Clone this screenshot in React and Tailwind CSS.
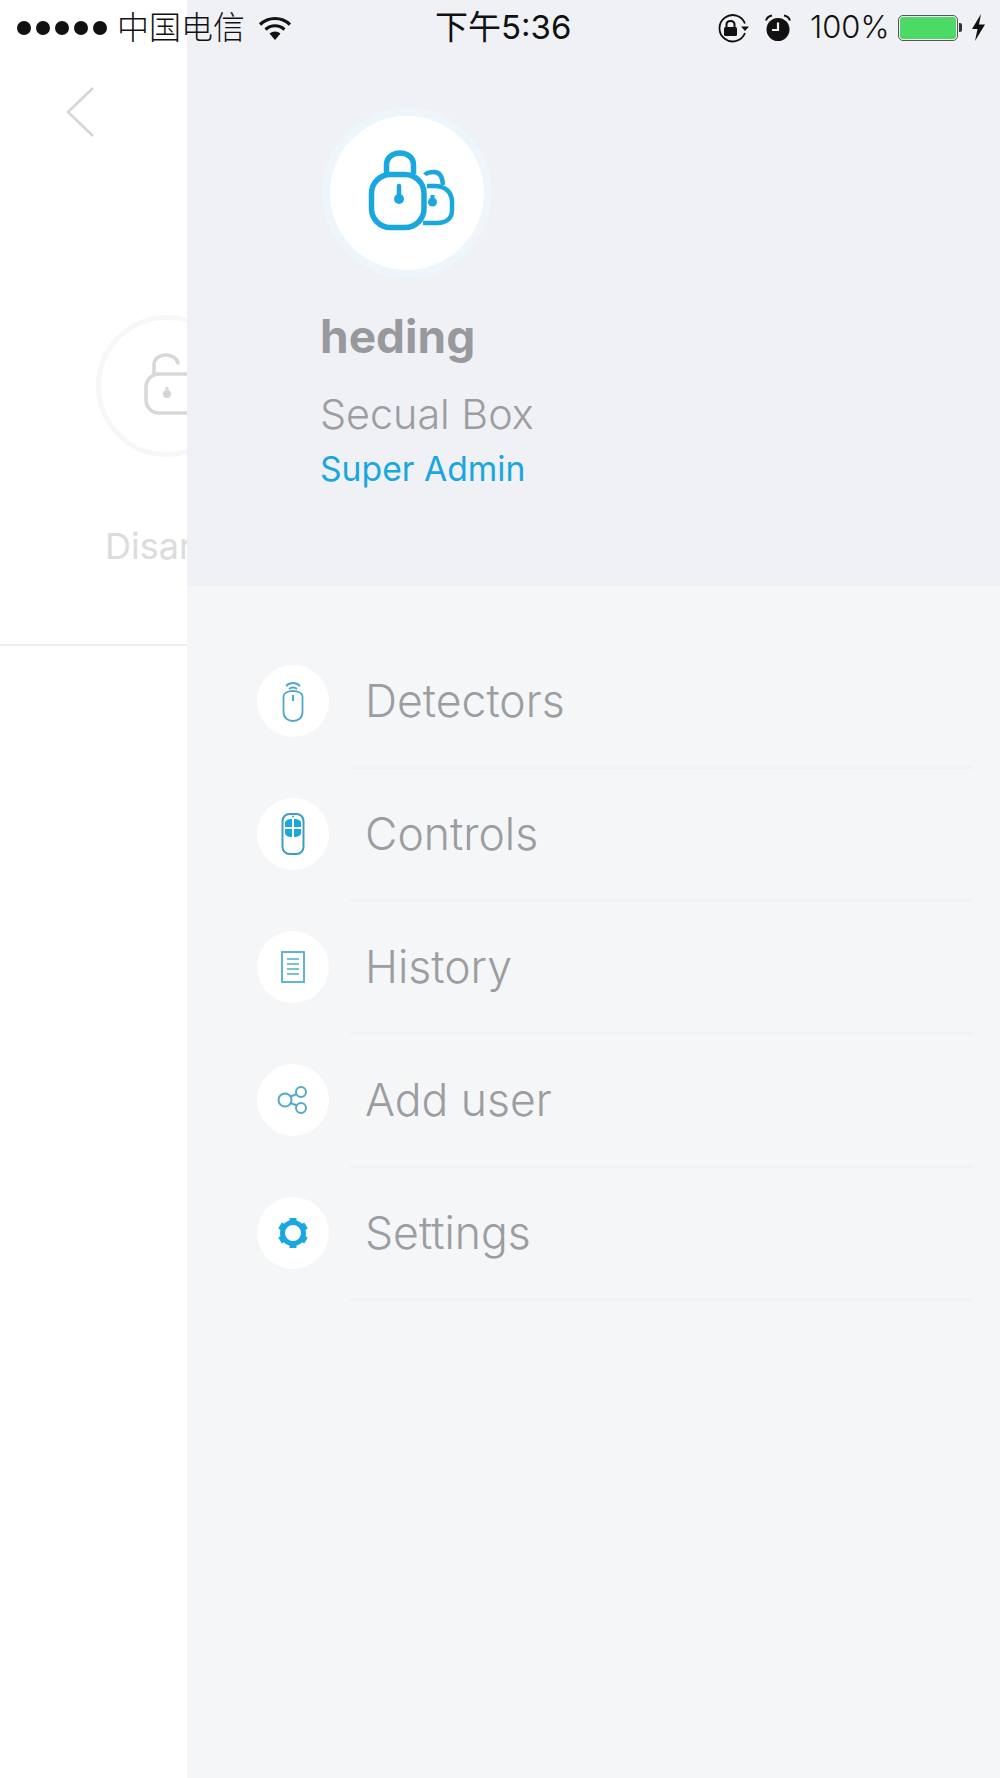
const blue = "#1aa7e0";

function Wifi() {
  return (
    <svg width="34" height="26" viewBox="0 0 34 26" fill="none">
      <path d="M2 9.5C10.5 1.5 23.5 1.5 32 9.5" stroke="#111" strokeWidth="3.2" />
      <path d="M7.5 14.5C13 9.5 21 9.5 26.5 14.5" stroke="#111" strokeWidth="3.2" />
      <path d="M11.5 18.5C14.8 15.8 19.2 15.8 22.5 18.5L17 25Z" fill="#111" />
    </svg>
  );
}

function RotationLock() {
  return (
    <svg width="34" height="30" viewBox="0 0 34 30" fill="none">
      <path d="M29 10.5A13.2 13.2 0 1 0 29 20" stroke="#111" strokeWidth="1.8" />
      <path d="M25 13.5H33L29 18Z" fill="#111" />
      <path d="M10.5 14.5V11.5C10.5 6.8 18.5 6.8 18.5 11.5V14.5" stroke="#111" strokeWidth="2" />
      <rect x="8" y="14" width="13" height="9" rx="1.5" fill="#111" />
    </svg>
  );
}

function Alarm() {
  return (
    <svg width="28" height="28" viewBox="0 0 28 28" fill="none">
      <circle cx="14" cy="15.5" r="11.5" fill="#111" />
      <path d="M14 8.5V16H8" stroke="#f0f1f4" strokeWidth="2.2" />
      <path d="M2 6.5C3 3.5 5 2 8 1.5" stroke="#111" strokeWidth="2" />
      <path d="M26 6.5C25 3.5 23 2 20 1.5" stroke="#111" strokeWidth="2" />
    </svg>
  );
}

function Bolt() {
  return (
    <svg width="15" height="27" viewBox="0 0 15 27">
      <path d="M10 0L1 15H6.5L4 27L14 10.5H8Z" fill="#111" />
    </svg>
  );
}

function StatusBar() {
  return (
    <div
      className="absolute top-0 left-0 w-[1000px] h-[55px] flex items-center text-[#111] text-[32px]"
      style={{ fontFamily: '"Inter", "Noto Sans CJK SC", sans-serif' }}
    >
      <div className="flex items-center gap-[5px] ml-[17px]">
        <span className="w-[14px] h-[14px] rounded-full bg-[#111]" />
        <span className="w-[14px] h-[14px] rounded-full bg-[#111]" />
        <span className="w-[14px] h-[14px] rounded-full bg-[#111]" />
        <span className="w-[14px] h-[14px] rounded-full bg-[#111]" />
        <span className="w-[14px] h-[14px] rounded-full bg-[#111]" />
      </div>
      <span className="ml-[10px] w-[129px] whitespace-nowrap font-light">中国电信</span>
      <span className="ml-[12px] flex"><Wifi /></span>
      <span className="ml-[143px] w-[136px] whitespace-nowrap text-[33px] font-normal">下午5:36</span>
      <span className="ml-[145px] flex"><RotationLock /></span>
      <span className="ml-[14px] flex"><Alarm /></span>
      <span className="ml-[18px] w-[80px] whitespace-nowrap font-light text-[31px]">100%</span>
      <div className="ml-[8px] flex items-center">
        <div className="w-[60px] h-[26px] rounded-[5px] border border-[#555] p-[1px]">
          <div className="w-full h-full rounded-[3px] bg-[#4cd964]" />
        </div>
        <div className="ml-[1px] w-[3px] h-[9px] rounded-r-[2px] bg-[#333]" />
      </div>
      <span className="ml-[9px] flex"><Bolt /></span>
    </div>
  );
}

function OpenLock() {
  return (
    <svg className="-mt-[4px]" width="44" height="62" viewBox="0 0 44 62" fill="none" stroke="#d8d8d8" strokeWidth="3.5">
      <path d="M10 22V12C10 -1 31 -1 34 10" strokeLinecap="round" />
      <rect x="2" y="21" width="60" height="39" rx="13" />
      <circle cx="23" cy="41" r="4" fill="#d4d4d4" stroke="none" />
      <path d="M23 34V40" strokeWidth="3" />
    </svg>
  );
}

function LeftPanel() {
  return (
    <div className="w-[187px] shrink-0 h-full bg-white overflow-hidden flex flex-col">
      <div className="h-[87px] shrink-0" />
      <svg className="ml-[66px] shrink-0" width="28" height="50" viewBox="0 0 28 50" fill="none">
        <path d="M27 1L2 25L27 49" stroke="#d6d6d6" strokeWidth="2.5" />
      </svg>
      <div className="mt-[178px] ml-[96px] w-[142px] h-[142px] shrink-0 rounded-full border-[5px] border-[#f7f7f7] flex items-center justify-start pl-[43px]">
        <OpenLock />
      </div>
      <div
        className="mt-[67px] ml-[105px] text-[36px] leading-[44px] text-[#dcdcdc] whitespace-nowrap shrink-0"
        style={{ fontFamily: '"Inter", sans-serif' }}
      >
        Disarm
      </div>
      <div className="mt-[76px] h-[2px] bg-[#eeeeee] shrink-0" />
    </div>
  );
}

function Locks() {
  return (
    <svg className="ml-[9px] -mt-[6px]" width="90" height="84" viewBox="0 0 90 84" fill="none" stroke={blue} strokeWidth="5.5">
      <path d="M19.5 26V17C19.5 1 46.5 1 46.5 17V26" />
      <path d="M58 27C60 24 64 24 67 24C73 24 75.5 29 76 37" strokeWidth="4.5" />
      <path d="M60 38H68C78 38 85 44 85 54V62C85 71 79 75 70 75H56" strokeWidth="4.5" />
      <rect x="4.5" y="26.5" width="52.5" height="53" rx="19" />
      <path d="M32 38V50" strokeWidth="4.5" strokeLinecap="round" />
      <circle cx="32" cy="51" r="5" fill={blue} stroke="none" />
      <path d="M65.5 47V52" strokeWidth="4" />
      <circle cx="65.5" cy="54" r="4.5" fill={blue} stroke="none" />
    </svg>
  );
}

function IconDetector() {
  return (
    <svg width="26" height="44" viewBox="0 0 26 44" fill="none" stroke="#4fa9c8" strokeWidth="1.8">
      <path d="M6 7C10 3 16 3 20 7" />
      <path d="M9 10C11 8 15 8 17 10" />
      <path d="M3.5 18C3.5 14 8 12 13 12C18 12 22.5 14 22.5 18V33C22.5 39 18 42 13 42C8 42 3.5 39 3.5 33Z" />
      <path d="M13 16V22" strokeWidth="2" />
    </svg>
  );
}

function IconControl() {
  return (
    <svg width="26" height="44" viewBox="0 0 26 44" fill="none">
      <rect x="2.5" y="2" width="21" height="40" rx="7" stroke="#3f9dbd" strokeWidth="2" />
      <path d="M5 11C5 8.5 8 7 12 7V15H5Z" fill={blue} />
      <path d="M21 11C21 8.5 18 7 14 7V15H21Z" fill={blue} />
      <path d="M5 17H12V25C8 25 5 23.5 5 21Z" fill={blue} />
      <path d="M21 17H14V25C18 25 21 23.5 21 21Z" fill={blue} />
      <circle cx="13" cy="4.5" r="1" fill="#3f9dbd" />
    </svg>
  );
}

function IconHistory() {
  return (
    <svg width="24" height="32" viewBox="0 0 24 32" fill="none" stroke="#4fb0c8">
      <rect x="1" y="1" width="22" height="30" strokeWidth="1.8" />
      <path d="M6 8H18M6 13H18M6 18H18M6 23H18" strokeWidth="1.6" />
    </svg>
  );
}

function IconShare() {
  return (
    <svg width="32" height="30" viewBox="0 0 32 30" fill="none" stroke="#55a9c6" strokeWidth="2">
      <circle cx="8" cy="15" r="6.5" />
      <circle cx="24" cy="7" r="5" />
      <circle cx="24" cy="23" r="5" />
      <path d="M13.5 11.5L20 9M13.5 18L20 20.5" />
    </svg>
  );
}

function IconGear() {
  return (
    <svg width="32" height="32" viewBox="0 0 32 32" fill="none">
      <circle cx="16" cy="16" r="10.5" stroke={blue} strokeWidth="5" />
      <rect x="12.5" y="1" width="7" height="6" fill={blue} />
      <rect x="12.5" y="1" width="7" height="6" fill={blue} transform="rotate(60 16 16)" />
      <rect x="12.5" y="1" width="7" height="6" fill={blue} transform="rotate(120 16 16)" />
      <rect x="12.5" y="1" width="7" height="6" fill={blue} transform="rotate(180 16 16)" />
      <rect x="12.5" y="1" width="7" height="6" fill={blue} transform="rotate(240 16 16)" />
      <rect x="12.5" y="1" width="7" height="6" fill={blue} transform="rotate(300 16 16)" />
    </svg>
  );
}

function MenuRow({ icon, label }) {
  return (
    <div className="h-[133px] flex flex-col">
      <div className="h-[130px] shrink-0 flex items-center">
        <div className="w-[72px] h-[72px] shrink-0 rounded-full bg-white flex items-center justify-center">
          {icon}
        </div>
        <span className="ml-[36px] text-[44.5px] leading-[50px] text-[#9c9da0] font-light">{label}</span>
      </div>
      <div className="ml-[93px] mr-[27px] h-[3px] shrink-0 bg-[#f1f2f4]" />
    </div>
  );
}

function Sidebar() {
  return (
    <div
      className="flex-1 h-full flex flex-col bg-[#f5f6f8]"
      style={{ fontFamily: '"Inter", sans-serif' }}
    >
      <div className="h-[586px] shrink-0 bg-[#f0f1f4] pl-[133px] flex flex-col">
        <div className="mt-[108px] ml-[2px] w-[170px] h-[170px] rounded-full border-[8px] border-[#eef6fb] bg-white flex items-center justify-center">
          <Locks />
        </div>
        <div className="mt-[32px] text-[46px] leading-[52px] font-bold text-[#98999c]">heding</div>
        <div className="mt-[29px] text-[41.3px] leading-[46px] text-[#9c9da0] font-light">Secual Box</div>
        <div className="mt-[12px] text-[33.7px] leading-[40px] text-[#1aa7e0]">Super Admin</div>
      </div>
      <div className="pl-[70px] pt-[50px]">
        <MenuRow icon={<IconDetector />} label="Detectors" />
        <MenuRow icon={<IconControl />} label="Controls" />
        <MenuRow icon={<IconHistory />} label="History" />
        <MenuRow icon={<IconShare />} label="Add user" />
        <MenuRow icon={<IconGear />} label="Settings" />
      </div>
    </div>
  );
}

export default function App() {
  return (
    <div className="relative w-[1000px] h-[1778px] flex overflow-hidden bg-white">
      <LeftPanel />
      <Sidebar />
      <StatusBar />
    </div>
  );
}
